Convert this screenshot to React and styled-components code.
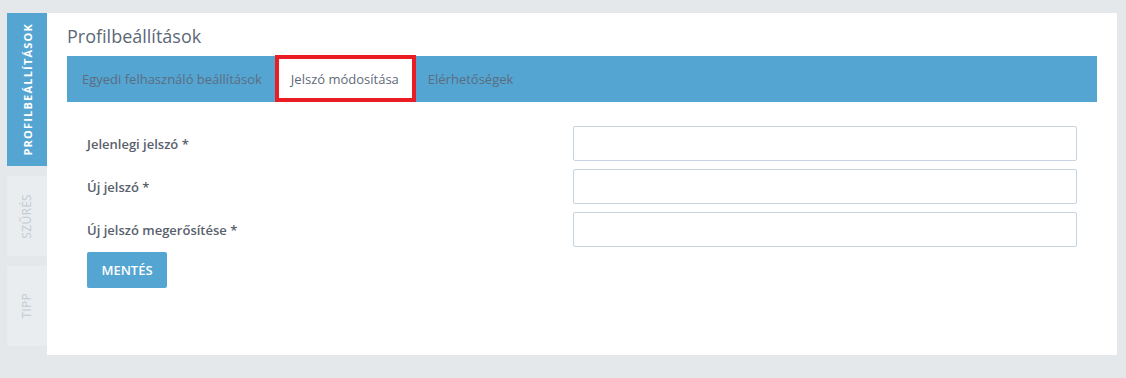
import React, { useState } from "react"
import styled, { createGlobalStyle } from "styled-components"

const GlobalStyle = createGlobalStyle`
  html, body {
    margin: 0;
    padding: 0;
    background: #e4e8eb;
    font-family: "Open Sans", "Liberation Sans", sans-serif;
  }
`

const Page = styled.div`
  display: flex;
  align-items: flex-start;
  padding: 13px 9px 23px 7px;
  height: 378px;
  box-sizing: border-box;
`

const SideTabs = styled.div`
  display: flex;
  flex-direction: column;
  gap: 10px;
  width: 40px;
  flex-shrink: 0;
`

const SideTab = styled.div`
  height: ${(p) => p.h}px;
  background: ${(p) => (p.active ? "#55a5d3" : "#e9edf0")};
  color: ${(p) => (p.active ? "#ffffff" : "#c3cbd2")};
  display: flex;
  align-items: center;
  justify-content: center;
`

const SideLabel = styled.span`
  writing-mode: vertical-rl;
  transform: rotate(180deg);
  font-size: ${(p) => (p.active ? "11px" : "12px")};
  font-weight: ${(p) => (p.active ? 700 : 400)};
  letter-spacing: ${(p) => (p.active ? "1.2px" : "0.3px")};
  text-transform: uppercase;
  line-height: 1;
`

const Panel = styled.div`
  flex: 1;
  background: #ffffff;
  height: 342px;
  padding: 11px 20px 0 20px;
  box-sizing: border-box;
`

const Title = styled.h1`
  margin: 0 0 8px 0;
  font-size: 18px;
  line-height: 24px;
  font-weight: 400;
  color: #5c6877;
`

const TabBar = styled.div`
  display: flex;
  height: 46px;
  background: #55a5d3;
`

const Tab = styled.div`
  position: relative;
  display: flex;
  align-items: center;
  padding: 0 14px 0 15px;
  font-size: 13px;
  color: ${(p) => (p.active ? "#5f6a79" : "#5b6d80")};
  background: ${(p) => (p.active ? "#ffffff" : "transparent")};
  cursor: pointer;

  &::after {
    content: "";
    display: ${(p) => (p.active ? "block" : "none")};
    position: absolute;
    left: -1px;
    right: -3px;
    top: -1px;
    bottom: 0;
    border: 4px solid #ea1c24;
    pointer-events: none;
  }
`

const Form = styled.form`
  padding: 24px 20px 0 20px;
`

const Row = styled.div`
  display: grid;
  grid-template-columns: 486px 504px;
  align-items: center;
  margin-bottom: 8px;
`

const Label = styled.label`
  font-size: 13px;
  font-weight: 600;
  color: #5a5f6e;
`

const Input = styled.input`
  height: 35px;
  box-sizing: border-box;
  border: 1px solid #c6d4e1;
  border-radius: 2px;
  padding: 0 10px;
  font-family: inherit;
  font-size: 13px;
  outline: none;
`

const SaveButton = styled.button`
  margin-top: -3px;
  width: 80px;
  height: 36px;
  border: none;
  border-radius: 2px;
  background: #55a5d3;
  color: #ffffff;
  font-family: inherit;
  font-size: 13px;
  font-weight: 600;
  cursor: pointer;
`

const tabs = ["Egyedi felhasználó beállítások", "Jelszó módosítása", "Elérhetőségek"]
const fields = ["Jelenlegi jelszó *", "Új jelszó *", "Új jelszó megerősítése *"]

export default function App() {
  const [active, setActive] = useState(1)

  return (
    <>
      <GlobalStyle />
      <Page>
        <SideTabs>
          <SideTab active h={153}>
            <SideLabel active>Profilbeállítások</SideLabel>
          </SideTab>
          <SideTab h={80}>
            <SideLabel>Szűrés</SideLabel>
          </SideTab>
          <SideTab h={80}>
            <SideLabel>Tipp</SideLabel>
          </SideTab>
        </SideTabs>
        <Panel>
          <Title>Profilbeállítások</Title>
          <TabBar>
            {tabs.map((t, i) => (
              <Tab key={t} active={i === active} onClick={() => setActive(i)}>
                {t}
              </Tab>
            ))}
          </TabBar>
          <Form onSubmit={(e) => e.preventDefault()}>
            {fields.map((f) => (
              <Row key={f}>
                <Label>{f}</Label>
                <Input type="password" />
              </Row>
            ))}
            <SaveButton type="submit">MENTÉS</SaveButton>
          </Form>
        </Panel>
      </Page>
    </>
  )
}
